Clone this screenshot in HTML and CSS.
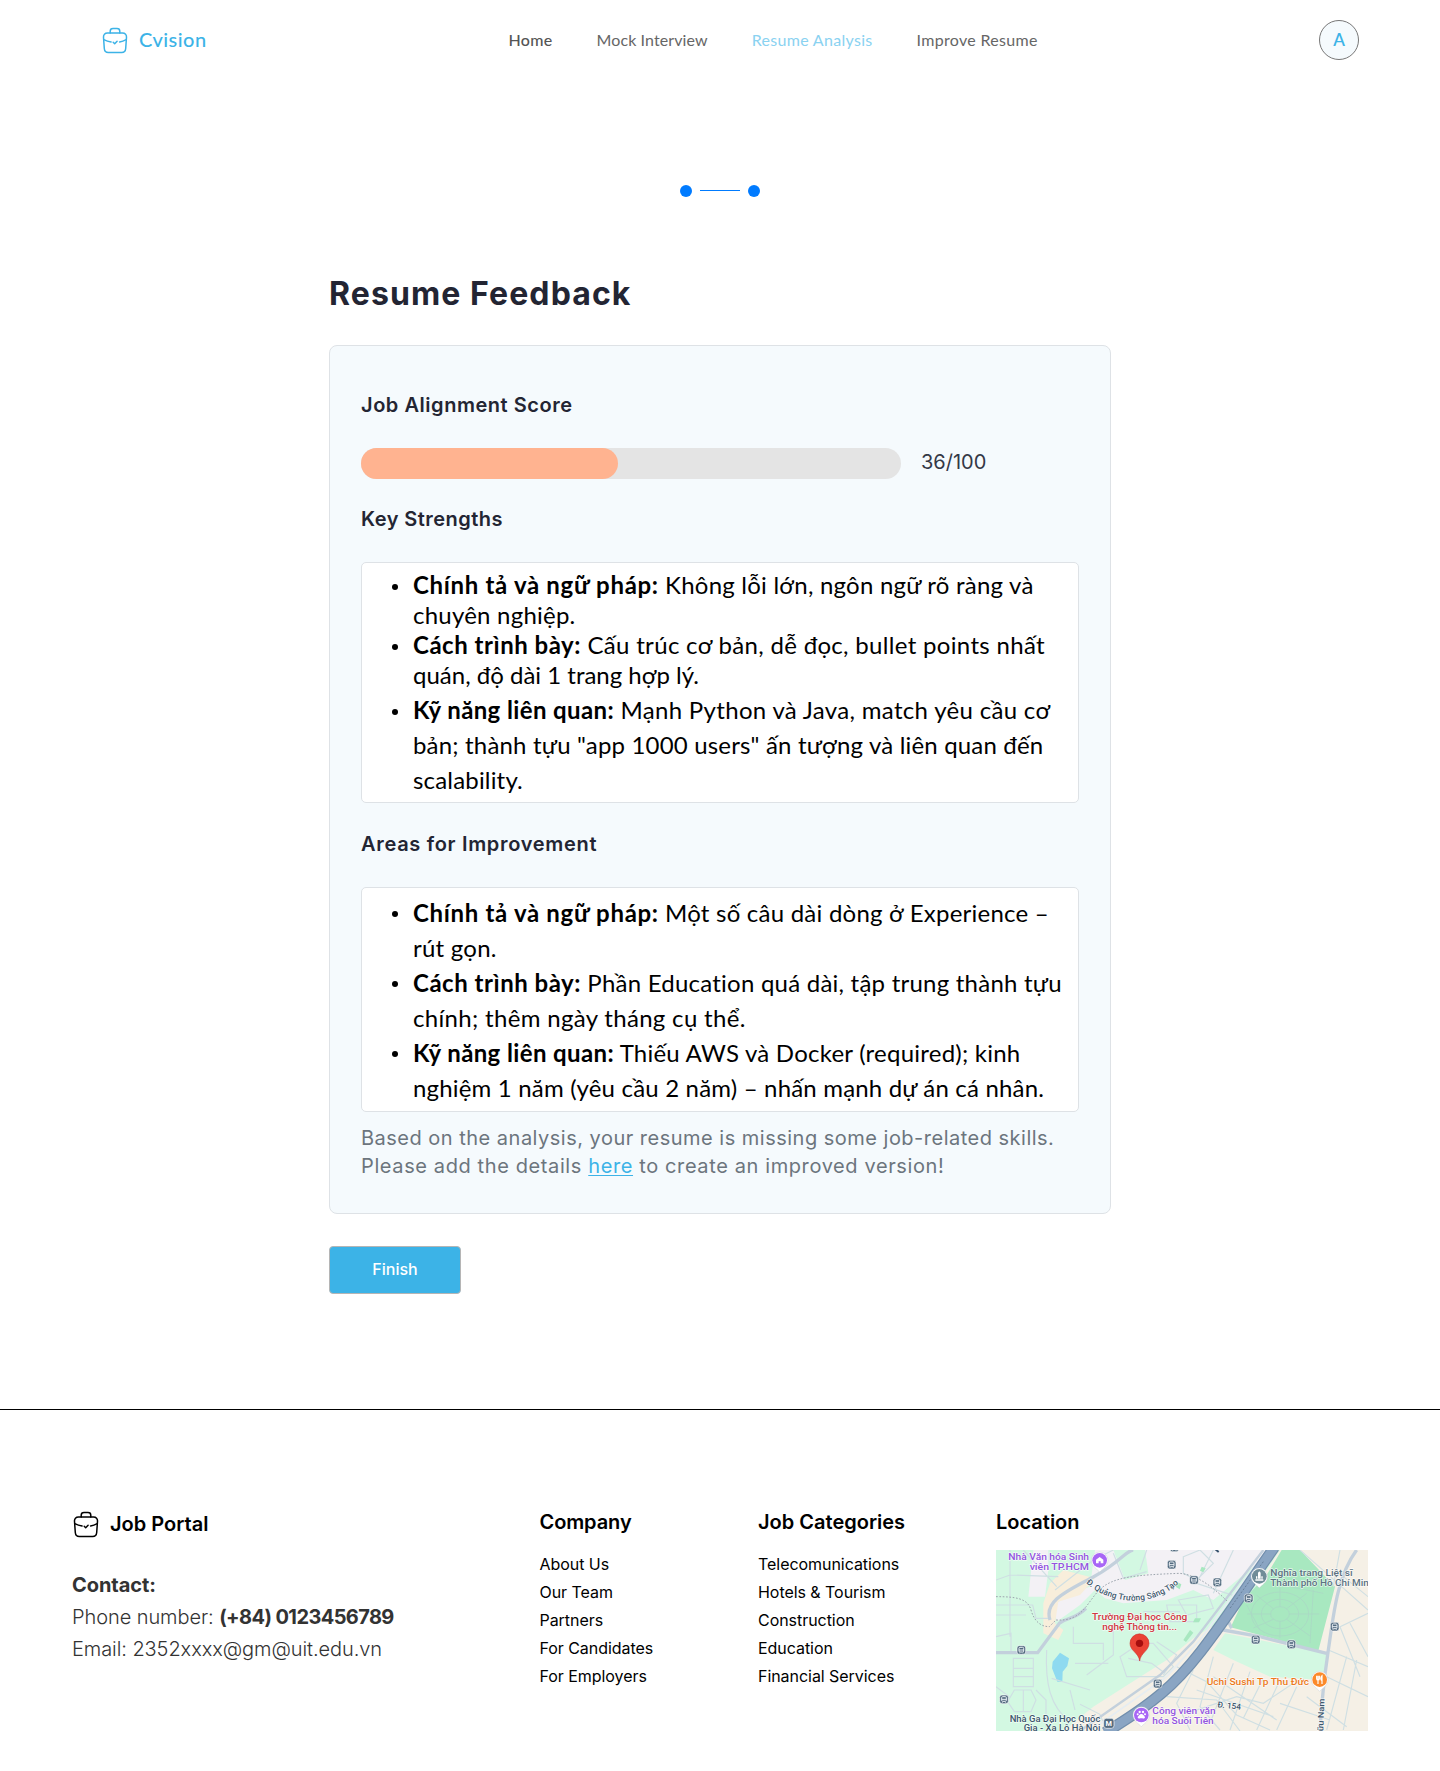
FILE: index.html
```html
<!DOCTYPE html>
<html lang="vi">
<head>
<meta charset="utf-8">
<title>Cvision – Resume Feedback</title>
<link rel="stylesheet" href="styles.css">
</head>
<body>
<svg class="defs" aria-hidden="true">
  <symbol id="briefcase" viewBox="0 0 26 27">
    <g fill="none" stroke="currentColor" stroke-width="1.5" stroke-linecap="round" stroke-linejoin="round">
      <path d="M8.2 6V4.2C8.2 2.4 9.300 1.500 11 1.500h4c1.700 0 2.800.9 2.800 2.700V6"/>
      <path d="M5.500 6h15c2.600 0 4.200 1.700 4 4.300l-.8 11.200c-.2 2.600-1.500 4-4 4H6.300c-2.500 0-3.800-1.400-4-4L1.500 10.300C1.300 7.700 2.900 6 5.500 6z"/>
      <path d="M1.800 12.600c2.300 1.200 4.700 2 7.300 2.400M24.200 12.600c-2.300 1.200-4.300 1.900-6.600 2.300"/>
      <path d="M11.200 15.200l1.500 1.500 2.400-2.500"/>
    </g>
  </symbol>
</svg>

<header class="topbar">
  <a class="brand"><svg class="brand-icon"><use href="#briefcase"/></svg><span>Cvision</span></a>
  <nav class="nav">
    <a class="nav-home">Home</a>
    <a class="nav-mock">Mock Interview</a>
    <a class="nav-active">Resume Analysis</a>
    <a>Improve Resume</a>
  </nav>
  <div class="avatar">A</div>
</header>

<div class="steps"><i class="dot"></i><i class="bar"></i><i class="dot"></i></div>

<main class="page">
  <h1>Resume Feedback</h1>
  <section class="card">
    <h2 class="h-score">Job Alignment Score</h2>
    <div class="score">
      <div class="track"><div class="fill"></div></div>
      <span>36/100</span>
    </div>
    <h2 class="h-key">Key Strengths</h2>
    <ul class="box box-key">
      <li><b class="k1">Chính tả và ngữ pháp:</b> Không lỗi lớn, ngôn ngữ rõ ràng và<br>chuyên nghiệp.</li>
      <li class="wide"><b class="k2">Cách trình bày:</b> Cấu trúc cơ bản, dễ đọc, bullet points nhất<br><span class="tight">quán, độ dài 1 trang hợp lý.</span></li>
      <li class="wide tall"><b class="k3">Kỹ năng liên quan:</b> Mạnh Python và Java, match yêu cầu cơ<br><span class="snug">bản; thành tựu "app 1000 users" ấn tượng và liên quan đến<br>scalability.</span></li>
    </ul>
    <h2 class="h-areas">Areas for Improvement</h2>
    <ul class="box box-areas">
      <li><b class="k1">Chính tả và ngữ pháp:</b> Một số câu dài dòng ở Experience –<br>rút gọn.</li>
      <li><b class="k2">Cách trình bày:</b> Phần Education quá dài, tập trung thành tựu<br><span class="wide">chính; thêm ngày tháng cụ thể.</span></li>
      <li><b class="k3">Kỹ năng liên quan:</b> Thiếu AWS và Docker (required); kinh<br><span class="snug">nghiệm 1 năm (yêu cầu 2 năm) – nhấn mạnh dự án cá nhân.</span></li>
    </ul>
    <p class="note">Based on the analysis, your resume is missing some job-related skills.<br><span>Please add the details <a>here</a> to create an improved version!</span></p>
  </section>
  <button class="finish">Finish</button>
</main>

<footer class="footer">
  <div class="about">
    <div class="portal"><svg class="brand-icon"><use href="#briefcase"/></svg><span>Job Portal</span></div>
    <p class="contact"><b class="c1">Contact:</b><br>Phone number: <b>(+84) 0123456789</b><br>Email: 2352xxxx@gm@uit.edu.vn</p>
  </div>
  <div>
    <h3 class="h-company">Company</h3>
    <ul class="links"><li>About Us</li><li>Our Team</li><li>Partners</li><li>For Candidates</li><li>For Employers</li></ul>
  </div>
  <div>
    <h3>Job Categories</h3>
    <ul class="links"><li>Telecomunications</li><li>Hotels &amp; Tourism</li><li>Construction</li><li>Education</li><li>Financial Services</li></ul>
  </div>
  <div>
    <h3>Location</h3>
    <svg class="map" viewBox="48 180 1116 543" preserveAspectRatio="none">
      <defs>
        <g id="stop"><rect x="-13" y="-13" width="26" height="26" rx="7" fill="#536b80" stroke="#fff" stroke-opacity=".6" stroke-width="3"/><rect x="-7" y="-8" width="14" height="14" rx="3" fill="none" stroke="#e8eef3" stroke-width="3"/><path d="M-7 0H7M-5 8v2M5 8v2" stroke="#e8eef3" stroke-width="3"/></g>
        <path id="pin" d="M0 35C-6 27-25 18-25 0a25 25 0 0 1 50 0C25 18 6 27 0 35z" fill="#fff" stroke="#b9bec8" stroke-width="1"/>
        <path id="tao" d="M318 278C370 332 500 365 596 280"/>
      </defs>
      <rect x="48" y="180" width="1116" height="543" fill="#d3f8e2"/>
      <!-- built-up areas -->
      <path d="M345 180H880L700 330 640 300 560 330 430 340 375 325 345 300 300 345 230 395 222 345 270 310 330 290z" fill="#f3f1f5"/>
      <path d="M400 180h95l10 70-70 20z" fill="#d3f8e2"/>
      <path d="M160 180h45v60l-10 80h-50z" fill="#f3f1f5"/>
      <path d="M250 240L345 265 300 315 235 335 225 400 250 420 235 450 190 430 190 340 210 280z" fill="#f8eedb"/>
      <path d="M640 445L560 510 340 650 250 723H1164V180H900L750 405 700 490 760 505 860 560 1000 570 1050 480 1060 180z" fill="#f5f0e6"/>
      <path d="M735 430L1040 490 1030 570 870 560 760 510 700 480z" fill="#d3f8e2"/>
      <path d="M905 180H960L1065 290 1015 482 752 412 790 330 860 255z" fill="#a8e8c0"/>
      <path d="M218 515L240 488 267 505 262 528 248 545 247 575H232L216 535z" fill="#8edaf0"/>
      <!-- local streets -->
      <g fill="none" stroke="#cfdfe3" stroke-width="3.500">
        <path d="M48 270L90 255 235 260M90 180v260M48 345h110l10 40h40M48 375h90M130 180l100 110M225 300L340 210 400 180M48 440l45-10v55M48 488h125l65-85"/>
        <path d="M100 505h60v85h-60zM100 535h60M100 560h60M103 600l-20 35 20 30h50l15-35-15-30zM130 600v65M48 590l40 30M168 600l30 30 0 80"/>
        <path d="M200 480c-5 100 10 170 70 215M215 565L330 600M270 600l15 60M285 520h100M280 410v50h90v50M400 410v85l-80 60"/>
        <path d="M480 460l-60 40 20 60h110l30-30-60-70zM445 505l70 15 40 30M530 455l60 40-40 60M560 345h90v50h-80zM595 330l90-15 15 40-80 20zM490 365h110"/>
        <path d="M400 190l30 75 70-20M500 180l-20 60M610 200l50-20 40 40-50 50-40-20zM700 180l-50 100 120 40M760 180l-60 130"/>
        <path d="M590 530l90 45 90 100 100 45M560 620l150 10 70 93M640 540l-50 100 40 80M700 500l-40 150 60 70M760 520l-70 180M810 545L750 720M850 565l-60 120M900 570l-70 150M700 560l190 130M650 600l230 80M620 670l150-50 80 20 90-60"/>
        <path d="M960 180l80 70 124 110M1080 180l-20 110M1090 260l74 60M1060 420l104-50M1045 480l119 50M1040 560l124 60M1080 410l60 150M1110 400l54 100M1100 500l-60 220M1130 510l-40 210M950 590l-60 130M980 620l120 90M900 640l150 50M380 723l-20-50-60-30"/>
      </g>
      <g fill="none" stroke="#a9d8c4" stroke-width="2.500">
        <ellipse cx="900" cy="372" rx="28" ry="22"/><ellipse cx="900" cy="372" rx="56" ry="44"/><ellipse cx="900" cy="372" rx="86" ry="66"/>
        <path d="M900 350v-60M900 394v50M872 372h-70M928 372h90M880 356l-50-40M920 356l60-46M880 388l-60 26M920 388l70 50M930 290l100 20M1000 300l-10 160M800 345l40 75"/>
      </g>
      <!-- wider streets -->
      <g fill="none" stroke="#c3d0dc" stroke-width="10">
        <path d="M48 488h125l65-88c20-18 45-10 80-45M210 390C190 330 270 300 345 258S440 180 460 180"/>
        <path d="M730 420l110 20 200 50M1130 180c-60 80-70 200-85 300s-20 150-25 243M740 385l15 30"/>
        <path d="M850 180L640 455 540 555 300 723" stroke-width="7"/>
        <path d="M860 180L660 450 560 560 330 723" stroke="#e6edf2" stroke-width="5"/>
      </g>
      <path d="M48 320c60 0 95 5 105 40s30 50 55 50l20-20c80 5 90-50 130-90s110-45 240-50c60 5 110 50 145 85" fill="none" stroke="#9da5ae" stroke-width="3" stroke-dasharray="5 5"/>
      <g fill="none">
        <path d="M883 172C800 290 740 385 662 485S520 640 375 728" stroke="#718eac" stroke-width="34"/>
        <path d="M883 172C800 290 740 385 662 485S520 640 375 728" stroke="#8aa5c3" stroke-width="27"/>
        <path d="M850 215L750 355" stroke="#68809b" stroke-width="3" stroke-dasharray="6 5"/>
      </g>
      <g fill="#a8e8c0"><path d="M665 230l12 5-7 12-10-5zM590 275l14 8-5 15-12-8zM645 385h18l-6 12h-18zM630 420l10 8-22 28-8-6z"/></g>
      <!-- transit stops -->
      <use href="#stop" x="583" y="172"/><use href="#stop" x="575" y="224"/><use href="#stop" x="642" y="270"/><use href="#stop" x="712" y="277"/><use href="#stop" x="806" y="325"/><use href="#stop" x="827" y="449"/><use href="#stop" x="934" y="463"/><use href="#stop" x="1064" y="410"/><use href="#stop" x="533" y="581"/><use href="#stop" x="124" y="480"/><use href="#stop" x="72" y="628"/>
      <path d="M706 178l10 8" stroke="#35506b" stroke-width="6"/>
      <!-- places -->
      <use href="#pin" x="359" y="211"/><circle cx="359" cy="211" r="22" fill="#a866f5"/><path d="M348 209l11-8 11 8v11h-8v-6h-6v6h-8z" fill="#fff"/>
      <use href="#pin" x="838" y="259"/><circle cx="838" cy="259" r="22" fill="#708c98"/><path d="M826 268h24v4h-24zM834 266v-18l4-4 4 4v18zM828 266v-7h4v7zM844 266v-7h4v7z" fill="#fff"/>
      <use href="#pin" x="1019" y="569"/><circle cx="1019" cy="569" r="22" fill="#fb8a2b"/><path d="M1010 557v9c0 6 8 6 8 0v-9M1014 557v25M1026 582v-25c-5 4-5 14 0 15" fill="none" stroke="#fff" stroke-width="3.500"/>
      <use href="#pin" x="484" y="675"/><circle cx="484" cy="675" r="22" fill="#a866f5"/><path d="M478 675c3-4 9-4 12 0l5 6c0 5-5 5-11 4-6 1-11 1-11-4z" fill="#fff"/><g fill="#fff"><circle cx="473" cy="673" r="3"/><circle cx="479" cy="666" r="3.500"/><circle cx="489" cy="666" r="3.500"/><circle cx="495" cy="673" r="3"/></g>
      <rect x="371" y="685" width="31" height="30" rx="8" fill="#536b80" stroke="#fff" stroke-width="2"/>
      <path d="M479 513C476 488 450 483 450 460a28.500 28.500 0 0 1 57 0C507 483 482 488 479 513z" fill="#ea4335" stroke="#c5221f" stroke-width="1.500"/><circle cx="478.500" cy="460" r="11" fill="#a50e0e"/>
      <g class="map-text">
        <g fill="#9355e0" text-anchor="end"><text x="327" y="209" textLength="242" lengthAdjust="spacingAndGlyphs">Nhà Văn hóa Sinh</text><text x="327" y="240" textLength="178" lengthAdjust="spacingAndGlyphs">viên TP.HCM</text></g>
        <g fill="#9355e0"><text x="517" y="673" textLength="190" lengthAdjust="spacingAndGlyphs">Công viên văn</text><text x="517" y="703" textLength="184" lengthAdjust="spacingAndGlyphs">hóa Suối Tiên</text></g>
        <g fill="#5b7282"><text x="871" y="257" textLength="247" lengthAdjust="spacingAndGlyphs">Nghĩa trang Liệt sĩ</text><text x="871" y="287" textLength="312" lengthAdjust="spacingAndGlyphs">Thành phố Hồ Chí Minh</text></g>
        <g fill="#d03742"><text x="336" y="391" textLength="286" lengthAdjust="spacingAndGlyphs">Trường Đại học Công</text><text x="367" y="421" textLength="224" lengthAdjust="spacingAndGlyphs">nghệ Thông tin...</text></g>
        <text x="680" y="584" textLength="307" lengthAdjust="spacingAndGlyphs" fill="#ed7a1c">Uchi Sushi Tp Thủ Đức</text>
        <g fill="#3c566c"><text x="89" y="696" textLength="272" lengthAdjust="spacingAndGlyphs">Nhà Ga Đại Học Quốc</text><text x="131" y="723" textLength="230" lengthAdjust="spacingAndGlyphs">Gia - Xa Lộ Hà Nội</text></g>
        <g fill="#3c566c" class="road"><text transform="translate(712 652) rotate(6)" textLength="70" lengthAdjust="spacingAndGlyphs">Đ. 154</text><text transform="translate(1030 724) rotate(-88)" textLength="98" lengthAdjust="spacingAndGlyphs">ữu Nam</text><text><textPath href="#tao" textLength="304">Đ. Quảng Trường Sáng Tạo</textPath></text></g>
      </g>
      <text x="386.500" y="709" class="metro">M</text>
    </svg>
  </div>
</footer>
</body>
</html>
```
FILE: styles.css
```css
* { box-sizing: border-box; }
body { margin: 0; background: #fff; font-family: "Inter", sans-serif; color: #000; height: 1771px; overflow: hidden; }
h1, h2, h3, p, ul { margin: 0; padding: 0; }
ul { list-style: none; }
.defs { display: none; }

/* header */
.topbar { height: 80px; padding: 0 81px 0 102px; display: grid; grid-template-columns: 406.5px 1fr 40px; align-items: center; font-family: "Lato", sans-serif; }
.brand { display: flex; align-items: center; gap: 11px; color: #3cb3e7; font-size: 20px; font-weight: 500; letter-spacing: .45px; }
.brand span { padding-bottom: 2px; }
.brand-icon { width: 26px; height: 27px; display: block; }
.nav { display: flex; gap: 44px; padding-bottom: 2px; font-size: 16px; color: #666; letter-spacing: .31px; white-space: nowrap; }
.nav-home { font-weight: 500; color: #555; }
.nav-mock { letter-spacing: .1px; }
.nav-active { color: #8ad2f1; }
.avatar { width: 40px; height: 40px; padding-bottom: 2px; border-radius: 50%; border: 1px solid #777; background: #f5fafd; color: #3cb3e7; font-size: 17px; font-weight: 600; display: flex; align-items: center; justify-content: center; }

.steps { display: flex; justify-content: center; gap: 8px; padding-top: 105px; }
.dot { width: 12px; height: 12px; border-radius: 50%; background: #007bff; }
.bar { width: 40px; height: 1px; margin-top: 5px; background: #007bff; }

/* feedback */
.page { width: 782px; margin: 73px auto 0; }
h1 { font-size: 32px; line-height: 48px; font-weight: 700; letter-spacing: 1.1px; color: #232533; }
.card { margin-top: 27px; height: 869px; padding: 44px 31px 0; border: 1px solid #dee2e6; border-radius: 8px; background: #f5fafd; }
h2 { font-size: 20px; line-height: 30px; font-weight: 600; color: #232533; white-space: nowrap; }
.h-score { letter-spacing: .54px; }
.h-key { letter-spacing: .45px; margin-top: 25.5px; }
.h-areas { letter-spacing: .69px; margin-top: 26px; }
.score { display: flex; align-items: center; gap: 20px; margin-top: 27.5px; font-size: 20px; color: #343846; }
.score span { padding-bottom: 2px; }
.track { width: 540px; height: 31px; border-radius: 16px; background: #e4e4e4; }
.fill { width: 257px; height: 31px; border-radius: 16px; background: #ffb390; }
.box { margin-top: 28px; padding: 7px 0 0 51px; border: 1px solid #dee2e6; border-radius: 5px; background: #fff; font-family: "Lato", sans-serif; font-size: 24px; line-height: 35px; letter-spacing: .23px; white-space: nowrap; }
.box-key { height: 241px; line-height: 30px; }
.box-areas { height: 225px; margin-top: 27.5px; padding-top: 7.5px; }
.box li { position: relative; }
.box li::before { content: ""; position: absolute; left: -21px; top: 14px; width: 6px; height: 6px; border-radius: 50%; background: #000; }
.box .tall { line-height: 35px; margin-top: 2px; }
.box-areas li::before { top: 16px; }
.box .tall::before { top: 17px; }
.box b { font-weight: 700; }
.box .k1 { letter-spacing: .68px; }
.box .k2 { letter-spacing: .52px; }
.box .k3 { letter-spacing: .38px; }
.box .wide { letter-spacing: .32px; }
.box .tight { letter-spacing: 0; }
.box .snug { letter-spacing: .18px; }
.note { margin-top: 12.5px; font-size: 20px; line-height: 28px; letter-spacing: .49px; color: #6c757d; white-space: nowrap; }
.note span { letter-spacing: .61px; }
.note a { color: #3cb3e7; text-decoration: underline; text-decoration-thickness: 1px; text-underline-offset: 2px; }
.finish { display: block; margin-top: 32px; width: 132px; height: 48px; padding: 0 0 2px; border: 1px solid #b5b5b5; border-radius: 4px; background: #3cb3e7; color: #fff; font: 500 16px "Inter", sans-serif; letter-spacing: 0; }

/* footer */
.footer { margin-top: 115px; border-top: 1px solid #000; padding: 98px 72px 0; display: grid; grid-template-columns: 467.5px 218.5px 238px 372px; }
h3, .portal { font-size: 20px; line-height: 28px; font-weight: 600; }
h3 { margin-bottom: 14px; }
.h-company { letter-spacing: -.1px; }
.portal { display: flex; align-items: center; gap: 11px; padding: 2px 0 0 1px; }
.contact { margin-top: 31px; font-size: 20px; line-height: 32px; font-weight: 300; letter-spacing: -.08px; color: #333; }
.contact b { font-weight: 700; letter-spacing: -.6px; }
.contact .c1 { letter-spacing: -.05px; }
.links { font-size: 16px; line-height: 28px; letter-spacing: -.05px; }
.map { display: block; width: 372px; height: 181px; }
.map-text { font: 500 29px "Roboto", sans-serif; paint-order: stroke; stroke: #fff; stroke-opacity: .7; stroke-width: 4px; stroke-linejoin: round; }
.road { font-size: 25px; }
.metro { font: 700 22px "Roboto", sans-serif; fill: #fff; text-anchor: middle; }
```
